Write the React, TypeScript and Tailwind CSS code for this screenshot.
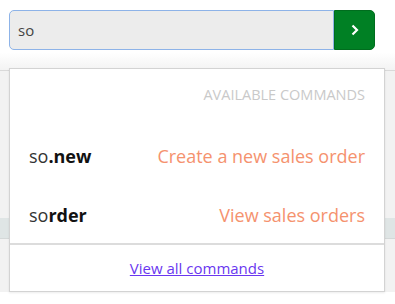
import React, { useState } from "react"

const commands = [
    { typed: "so", rest: ".new", label: "Create a new sales order" },
    { typed: "so", rest: "rder", label: "View sales orders" },
]

const App: React.FC = () => {
    const [query, setQuery] = useState("so")

    return (
        <div className="relative w-[395px] h-[304px] overflow-hidden bg-white" style={{ fontFamily: '"Open Sans", sans-serif' }}>
            {/* search bar */}
            <div className="h-[70px] bg-gradient-to-b from-white from-75% to-[#f3f3f3] pt-[10px] pl-[9px]">
                <div className="flex w-[366px] h-[40px]">
                    <input
                        value={query}
                        onChange={(e) => setQuery(e.target.value)}
                        className="flex-1 min-w-0 h-full rounded-l-[5px] border border-[#8db3e8] bg-[#ececec] pl-[8px] text-[15px] text-[#444] outline-none"
                    />
                    <button className="w-[41px] h-full rounded-r-[5px] bg-[#008024] border border-[#006d1e] flex items-center justify-center">
                        <svg width="10" height="12" viewBox="0 0 10 12" fill="none">
                            <path d="M2.5 1.5 L7 6 L2.5 10.5" stroke="white" strokeWidth="2.2" />
                        </svg>
                    </button>
                </div>
            </div>

            {/* page behind */}
            <div className="h-[222px] border-t border-[#d9d9d9] bg-[#f2f2f2] pt-[147px]">
                <div className="h-[21px] bg-[#dfe5e5] border-b border-[#d4d8d8]" />
            </div>

            {/* dropdown */}
            <div className="absolute left-[9px] top-[68px] w-[376px] h-[224px] bg-white border border-[#d3d3d3] shadow-[0_1px_2px_rgba(0,0,0,0.08)] flex flex-col">
                <div className="pt-[16px] pr-[19px] text-right text-[14.5px] leading-[20px] text-[#c9c9c9] uppercase">
                    Available commands
                </div>
                <div className="pt-[39px] flex flex-col gap-[35px]">
                    {commands.map((c) => (
                        <div key={c.rest} className="flex justify-between items-center px-[19px] h-[24px] text-[18px]">
                            <span className="text-[#333]">
                                {c.typed}
                                <span className="font-bold text-[#111]">{c.rest}</span>
                            </span>
                            <span className="text-[#f5926e]">{c.label}</span>
                        </div>
                    ))}
                </div>
                <div className="mt-auto h-[48px] border-t-2 border-[#dcdcdc] flex items-center justify-center">
                    <a href="#" className="text-[15px] text-[#6a37f0] underline">View all commands</a>
                </div>
            </div>
        </div>
    )
}

export default App
